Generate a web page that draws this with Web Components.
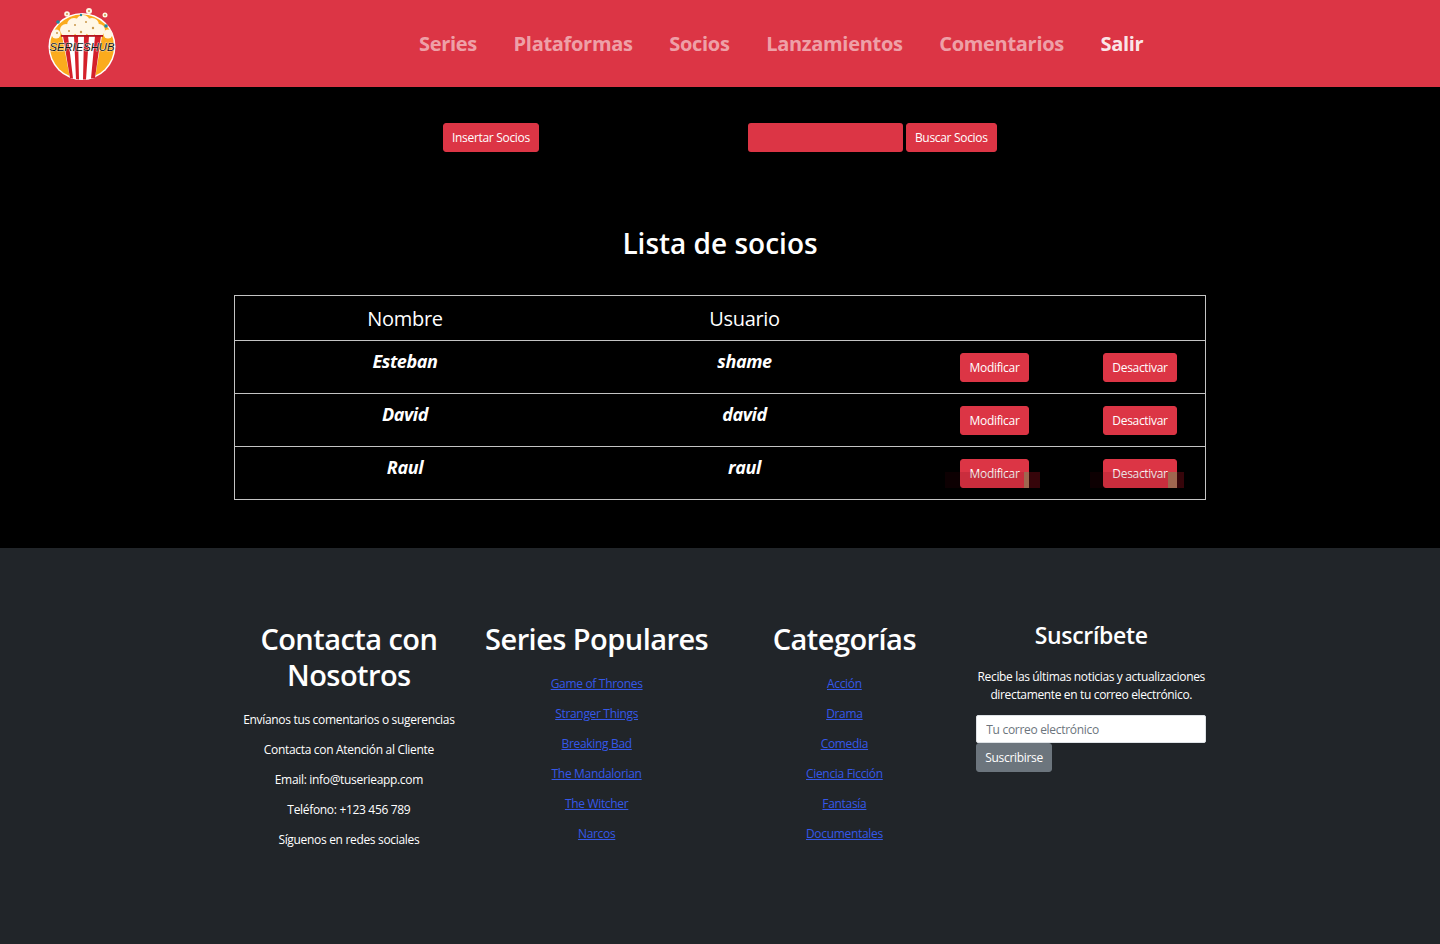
<!DOCTYPE html>
<html lang="es">
<head>
<meta charset="utf-8">
<title>Socios</title>
<style>
html, body { margin: 0; padding: 0; background: #000; }
body { font-family: "Open Sans", "Noto Sans", sans-serif; color: #fff; font-size: 12px; }
</style>
</head>
<body>
<app-nav></app-nav>
<socios-tools></socios-tools>
<socios-list></socios-list>
<app-footer></app-footer>

<script>
const red = "#dc3545";

class RedButton extends HTMLElement {
  constructor() {
    super();
    this.attachShadow({ mode: "open" });
    this.shadowRoot.innerHTML = `
    <style>
    :host { display: inline-block; }
    button {
      display: block;
      font: inherit;
      font-size: 12px;
      letter-spacing: -0.31px;
      line-height: 19px;
      color: #fff;
      background: ${red};
      border: 1px solid ${red};
      border-radius: 3px;
      padding: 4px var(--px, 9px);
      white-space: nowrap;
    }
    :host([grey]) button { background: #6c757d; border-color: #6c757d; }
    </style>
    <button><slot></slot></button>`;
  }
}
customElements.define("red-button", RedButton);

class AppNav extends HTMLElement {
  constructor() {
    super();
    this.attachShadow({ mode: "open" });
    const items = ["Series", "Plataformas", "Socios", "Lanzamientos", "Comentarios"];
    this.shadowRoot.innerHTML = `
    <style>
    :host { display: flex; height: 87px; background: ${red}; align-items: center; padding-left: 48px; }
    svg { width: 69px; height: 74px; flex: none; display: block; margin-top: 1px; }
    nav { display: flex; gap: 36.6px; margin-left: 302px; padding-top: 1px; }
    a { font-size: 20px; font-weight: 700; letter-spacing: -0.3px; color: rgba(255,255,255,.55); text-decoration: none; line-height: 28px; }
    a.on { color: rgba(255,255,255,.9); }
    text { font-family: "Liberation Sans", sans-serif; font-style: italic; paint-order: stroke; }
    </style>
    <svg viewBox="0 0 69 74">
      <circle cx="34" cy="39.500" r="33.500" fill="#fff"/>
      <circle cx="34" cy="39.500" r="32" fill="#fbab1d"/>
      <g fill="#fff7e6">
        <circle cx="8" cy="27" r="4.500"/><circle cx="60" cy="27" r="4.500"/>
        <circle cx="18" cy="23" r="6"/><circle cx="26" cy="18" r="7"/><circle cx="35" cy="15" r="7"/>
        <circle cx="44" cy="18" r="7"/><circle cx="51" cy="23" r="6"/><circle cx="33" cy="23" r="7"/><circle cx="43" cy="24" r="5"/><circle cx="23" cy="24" r="5"/>
        <circle cx="19" cy="7" r="2.800"/><circle cx="41" cy="4" r="3"/><circle cx="57" cy="8" r="2.500"/>
      </g>
      <g fill="#c9974a">
        <circle cx="19" cy="7" r="1"/><circle cx="41" cy="4" r="1"/><circle cx="57" cy="8" r="1"/>
        <circle cx="27" cy="18" r="1"/><circle cx="38" cy="15" r="1"/><circle cx="45" cy="21" r="1.200"/><circle cx="21" cy="24" r="1"/><circle cx="33" cy="25" r="1.200"/><circle cx="9" cy="26" r="1"/>
      </g>
      <circle cx="10" cy="15" r="1.800" fill="#22899f"/><circle cx="58" cy="19" r="1.800" fill="#22899f"/><circle cx="33" cy="8" r="1.200" fill="#22899f"/>
      <path d="M14 29H54L47 71Q34 74 22 71Z" fill="#fff"/>
      <path d="M15 29H20L25 71.500 22 71ZM26 29H30L31 72.500 28 72ZM36 29H41L38 72.500 35 72.500ZM47 29H53L47 71 43 71.500Z" fill="#d4202a"/>
      <rect x="13" y="28" width="42" height="1.800" fill="#b5141e"/>
      <text x="34" y="44" text-anchor="middle" font-size="11" fill="#141414" stroke="#f4f6f2" stroke-width=".7" textLength="65" lengthAdjust="spacingAndGlyphs">SERIESHUB</text>
    </svg>
    <nav>
      ${items.map((t) => `<a href="#">${t}</a>`).join("")}
      <a class="on" href="#">Salir</a>
    </nav>`;
  }
}
customElements.define("app-nav", AppNav);

class SociosTools extends HTMLElement {
  constructor() {
    super();
    this.attachShadow({ mode: "open" });
    this.shadowRoot.innerHTML = `
    <style>
    :host { display: flex; padding: 36px 0 0 443px; height: 29px; color: #fff; --px: 8px; }
    .box { width: 155px; height: 29px; background: ${red}; border-radius: 3px; margin-left: 209px; margin-right: 3px; }
    </style>
    <red-button>Insertar Socios</red-button>
    <div class="box"></div>
    <red-button>Buscar Socios</red-button>`;
  }
}
customElements.define("socios-tools", SociosTools);

class SocioRow extends HTMLElement {
  constructor() {
    super();
    this.attachShadow({ mode: "open" });
    const stain = this.hasAttribute("stain") ? "<i><b></b><u></u></i>" : "";
    this.shadowRoot.innerHTML = `
    <style>
    :host { display: grid; grid-template-columns: 340px 339px 161px 130px; height: 52px; border-top: 1px solid #c4c4c4; }
    div { text-align: center; }
    .n { font-size: 18px; font-weight: 700; font-style: italic; letter-spacing: -0.4px; line-height: 24px; padding-top: 8px; }
    .b { position: relative; padding-top: 12px; }
    .b + .b { --px: 8px; }
    /* mancha oscura que sale encima de los botones de la ultima fila */
    i { position: absolute; left: 31px; top: 25px; width: 95px; height: 16px; background: rgba(90,0,12,.14); }
    .b + .b i { left: 15px; width: 94px; }
    b { position: absolute; right: 0; top: 0; width: 16px; height: 16px; background: #36050a; }
    u { position: absolute; right: 11px; top: 0; width: 5px; height: 16px; background: #a0664f; }
    .b + .b u { right: 7px; width: 9px; }
    </style>
    <div class="n">${this.getAttribute("nombre")}</div>
    <div class="n">${this.getAttribute("usuario")}</div>
    <div class="b"><red-button>Modificar</red-button>${stain}</div>
    <div class="b"><red-button>Desactivar</red-button>${stain}</div>`;
  }
}
customElements.define("socio-row", SocioRow);

class SociosList extends HTMLElement {
  constructor() {
    super();
    this.attachShadow({ mode: "open" });
    this.shadowRoot.innerHTML = `
    <style>
    :host { display: block; height: 396px; }
    h2 { margin: 0; padding-top: 71px; height: 72px; text-align: center; font-size: 28px; font-weight: 600; line-height: 40px; }
    .t { margin: 0 234px; border: 1px solid #c4c4c4; height: 203px; }
    .h { display: grid; grid-template-columns: 340px 339px; height: 44px; text-align: center; font-size: 20px; letter-spacing: -0.3px; line-height: 46px; }
    </style>
    <h2>Lista de socios</h2>
    <div class="t">
      <div class="h"><div>Nombre</div><div>Usuario</div></div>
      <socio-row nombre="Esteban" usuario="shame"></socio-row>
      <socio-row nombre="David" usuario="david"></socio-row>
      <socio-row nombre="Raul" usuario="raul" stain></socio-row>
    </div>`;
  }
}
customElements.define("socios-list", SociosList);

class LinkCol extends HTMLElement {
  constructor() {
    super();
    this.attachShadow({ mode: "open" });
    this.shadowRoot.innerHTML = `
    <style>
    :host { display: block; text-align: center; }
    h3 { margin: 0 0 12px; font-size: 29px; font-weight: 600; letter-spacing: -0.55px; line-height: 36px; }
    ::slotted(a) { display: block; height: 30px; line-height: 30px; color: #3558e8; text-decoration: underline; font-size: 12px; letter-spacing: -0.32px; }
    </style>
    <h3>${this.getAttribute("title")}</h3>
    <slot></slot>`;
  }
}
customElements.define("link-col", LinkCol);

class AppFooter extends HTMLElement {
  constructor() {
    super();
    this.attachShadow({ mode: "open" });
    this.shadowRoot.innerHTML = `
    <style>
    :host { display: grid; grid-template-columns: repeat(4, 247.75px); height: 396px; background: #212529; padding: 73px 0 0 225px; box-sizing: border-box; width: 100%; font-size: 12px; letter-spacing: -0.32px; }
    .c { text-align: center; }
    h3 { margin: 0 0 12px; font-size: 29px; font-weight: 600; letter-spacing: -0.55px; line-height: 36px; }
    p { margin: 0; height: 30px; line-height: 30px; }
    .s { width: 230px; margin: 0 0 0 8px; }
    .s h4 { margin: 0 0 19px; font-size: 23px; font-weight: 600; letter-spacing: -0.3px; line-height: 28px; }
    .s p { height: 18px; line-height: 18px; white-space: nowrap; letter-spacing: -0.35px; }
    .f { margin-top: 11px; text-align: left; --px: 8px; }
    input { display: block; box-sizing: border-box; width: 230px; height: 28px; border: 1px solid #dee2e6; border-radius: 2px; padding: 0 9px; font: inherit; letter-spacing: -0.3px; background: #fff; }
    input::placeholder { color: #6c757d; opacity: 1; }
    </style>
    <div class="c">
      <h3>Contacta con Nosotros</h3>
      <p>Envíanos tus comentarios o sugerencias</p>
      <p>Contacta con Atención al Cliente</p>
      <p>Email: info@tuserieapp.com</p>
      <p>Teléfono: +123 456 789</p>
      <p>Síguenos en redes sociales</p>
    </div>
    <link-col title="Series Populares">
      <a href="#">Game of Thrones</a>
      <a href="#">Stranger Things</a>
      <a href="#">Breaking Bad</a>
      <a href="#">The Mandalorian</a>
      <a href="#">The Witcher</a>
      <a href="#">Narcos</a>
    </link-col>
    <link-col title="Categorías">
      <a href="#">Acción</a>
      <a href="#">Drama</a>
      <a href="#">Comedia</a>
      <a href="#">Ciencia Ficción</a>
      <a href="#">Fantasía</a>
      <a href="#">Documentales</a>
    </link-col>
    <div class="c s">
      <h4>Suscríbete</h4>
      <p>Recibe las últimas noticias y actualizaciones</p>
      <p>directamente en tu correo electrónico.</p>
      <div class="f">
        <input placeholder="Tu correo electrónico">
        <red-button grey>Suscribirse</red-button>
      </div>
    </div>`;
  }
}
customElements.define("app-footer", AppFooter);
</script>
</body>
</html>
